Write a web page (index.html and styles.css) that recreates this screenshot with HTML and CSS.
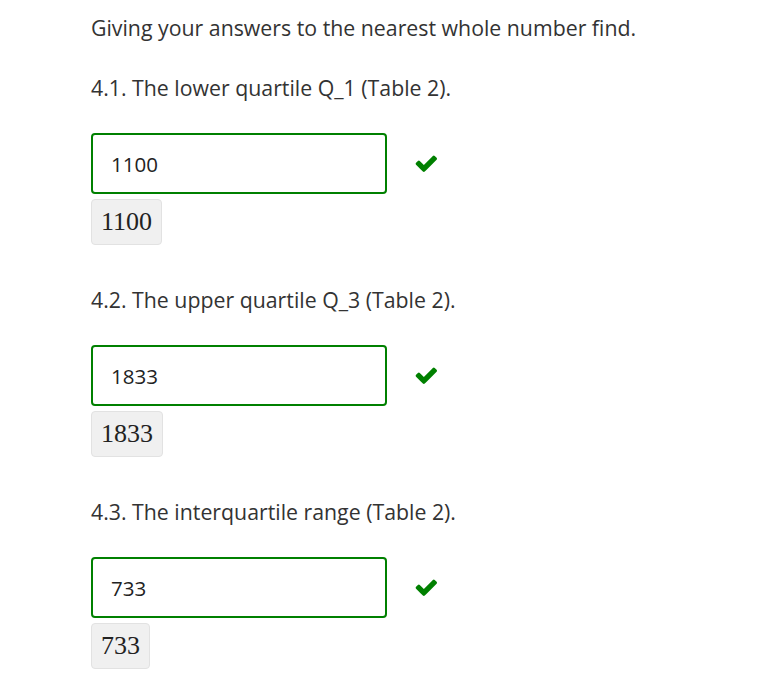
FILE: index.html
```html
<!DOCTYPE html>
<html>
<head>
<meta charset="utf-8">
<link rel="stylesheet" href="styles.css">
</head>
<body>
<div class="page">
  <p class="text">Giving your answers to the nearest whole number find.</p>

  <div class="question">
    <p class="text">4.1. The lower quartile Q_1 (Table 2).</p>
    <div class="answer-row">
      <div class="input">1100</div>
      <svg class="check" viewBox="0 300 1671 1222" width="23" height="17"><path d="M1671 566q0 40-28 68l-724 724-136 136q-28 28-68 28t-68-28l-136-136-362-362q-28-28-28-68t28-68l136-136q28-28 68-28t68 28l294 295 656-657q28-28 68-28t68 28l136 136q28 28 28 68z" fill="#008000"/></svg>
    </div>
    <div class="result">1100</div>
  </div>

  <div class="question">
    <p class="text">4.2. The upper quartile Q_3 (Table 2).</p>
    <div class="answer-row">
      <div class="input">1833</div>
      <svg class="check" viewBox="0 300 1671 1222" width="23" height="17"><path d="M1671 566q0 40-28 68l-724 724-136 136q-28 28-68 28t-68-28l-136-136-362-362q-28-28-28-68t28-68l136-136q28-28 68-28t68 28l294 295 656-657q28-28 68-28t68 28l136 136q28 28 28 68z" fill="#008000"/></svg>
    </div>
    <div class="result">1833</div>
  </div>

  <div class="question">
    <p class="text">4.3. The interquartile range (Table 2).</p>
    <div class="answer-row">
      <div class="input">733</div>
      <svg class="check" viewBox="0 300 1671 1222" width="23" height="17"><path d="M1671 566q0 40-28 68l-724 724-136 136q-28 28-68 28t-68-28l-136-136-362-362q-28-28-28-68t28-68l136-136q28-28 68-28t68 28l294 295 656-657q28-28 68-28t68 28l136 136q28 28 28 68z" fill="#008000"/></svg>
    </div>
    <div class="result">733</div>
  </div>
</div>
</body>
</html>
```
FILE: styles.css
```css
html, body {
  margin: 0;
  padding: 0;
  background: #fff;
}
body {
  font-family: "Open Sans", "Liberation Sans", sans-serif;
  color: #333;
}
.page {
  padding: 13px 0 0 91px;
}
.text {
  margin: 0;
  font-size: 21.3px;
  line-height: 30px;
}
.question {
  margin-top: 30px;
  margin-bottom: 40px;
}
.answer-row {
  margin-top: 30px;
  display: flex;
  align-items: center;
}
.input {
  box-sizing: border-box;
  width: 296px;
  height: 61px;
  border: 2px solid #008000;
  border-radius: 4px;
  padding: 0 18px;
  display: flex;
  align-items: center;
  font-size: 20.5px;
  color: #222;
}
.check {
  margin-left: 27px;
  display: block;
}
.result {
  box-sizing: border-box;
  display: inline-flex;
  align-items: center;
  margin-top: 5px;
  height: 46px;
  padding: 0 9px;
  background: #f0f0f0;
  border: 1px solid #e2e2e2;
  border-radius: 4px;
  font-family: "Liberation Serif", serif;
  font-size: 26px;
  color: #222;
}
```
